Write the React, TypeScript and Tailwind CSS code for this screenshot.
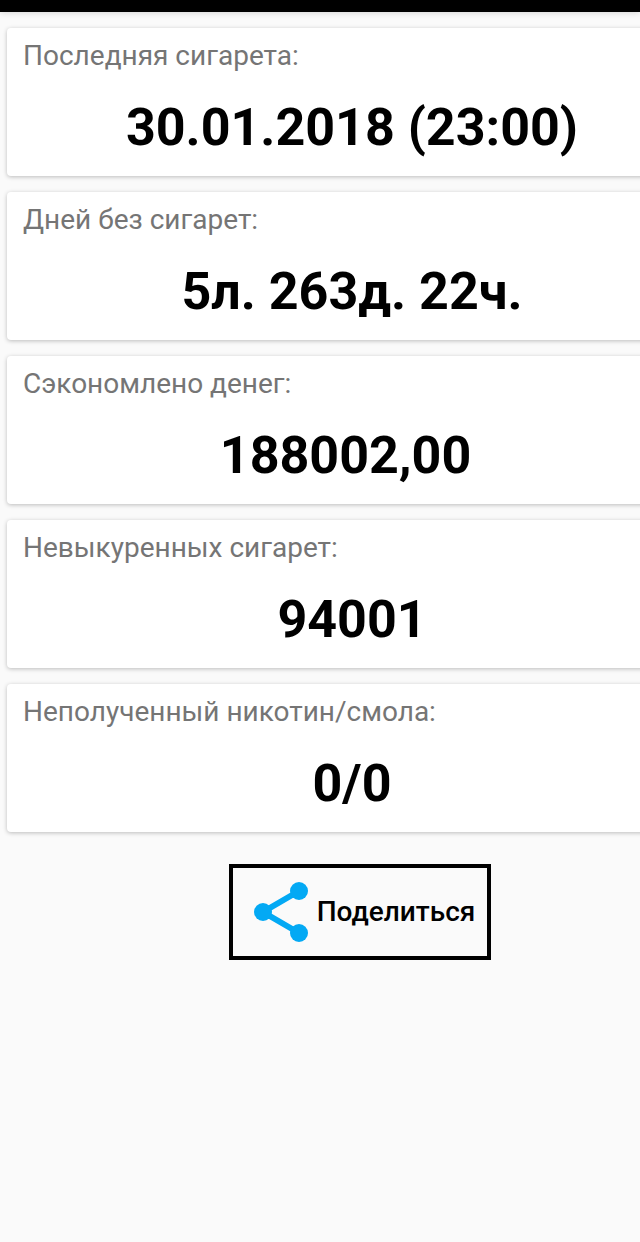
type Stat = {
  label: string;
  value: string;
};

const stats: Stat[] = [
  { label: 'Последняя сигарета:', value: '30.01.2018 (23:00)' },
  { label: 'Дней без сигарет:', value: '5л. 263д. 22ч.' },
  // the currency sign is empty, so only the space before it is left
  { label: 'Сэкономлено денег:', value: '188002,00 ' },
  { label: 'Невыкуренных сигарет:', value: '94001' },
  { label: 'Неполученный никотин/смола:', value: '0/0' },
];

function StatCard({ label, value }: Stat) {
  return (
    <section className="rounded bg-white px-4 pt-3 pb-4 shadow-[0_1px_4px_rgba(0,0,0,0.25)]">
      <h2 className="text-[28px] leading-8 text-[#757575]">{label}</h2>
      <p className="mt-6 text-center text-[52px] leading-[64px] font-bold whitespace-pre text-black">{value}</p>
    </section>
  );
}

function ShareIcon() {
  return (
    <svg className="h-[72px] w-[72px] shrink-0 text-[#03a9f4]" viewBox="0 0 24 24" fill="currentColor" aria-hidden="true">
      <path d="M18 5L6 12l12 7" fill="none" stroke="currentColor" strokeWidth={2} />
      <circle cx="18" cy="5" r="3" />
      <circle cx="6" cy="12" r="3" />
      <circle cx="18" cy="19" r="3" />
    </svg>
  );
}

export default function App() {
  return (
    <div className="min-h-screen overflow-x-hidden bg-[#fafafa] font-[Roboto,sans-serif]">
      <div className="h-3 bg-black shadow-[0_1px_6px_rgba(0,0,0,0.15)]" />

      {/* The list is wider than the screen and runs off its right edge */}
      <main className="w-[calc(100%+64px)] px-[7px] pt-4 pb-8">
        <div className="flex flex-col gap-4">
          {stats.map((stat) => (
            <StatCard key={stat.label} label={stat.label} value={stat.value} />
          ))}
        </div>

        <div className="mt-8 flex justify-center pl-4">
          <button
            type="button"
            className="flex items-center border-4 border-black px-3 py-2 text-[28px] leading-8 font-medium text-black"
          >
            <ShareIcon />
            Поделиться
          </button>
        </div>
      </main>
    </div>
  );
}
